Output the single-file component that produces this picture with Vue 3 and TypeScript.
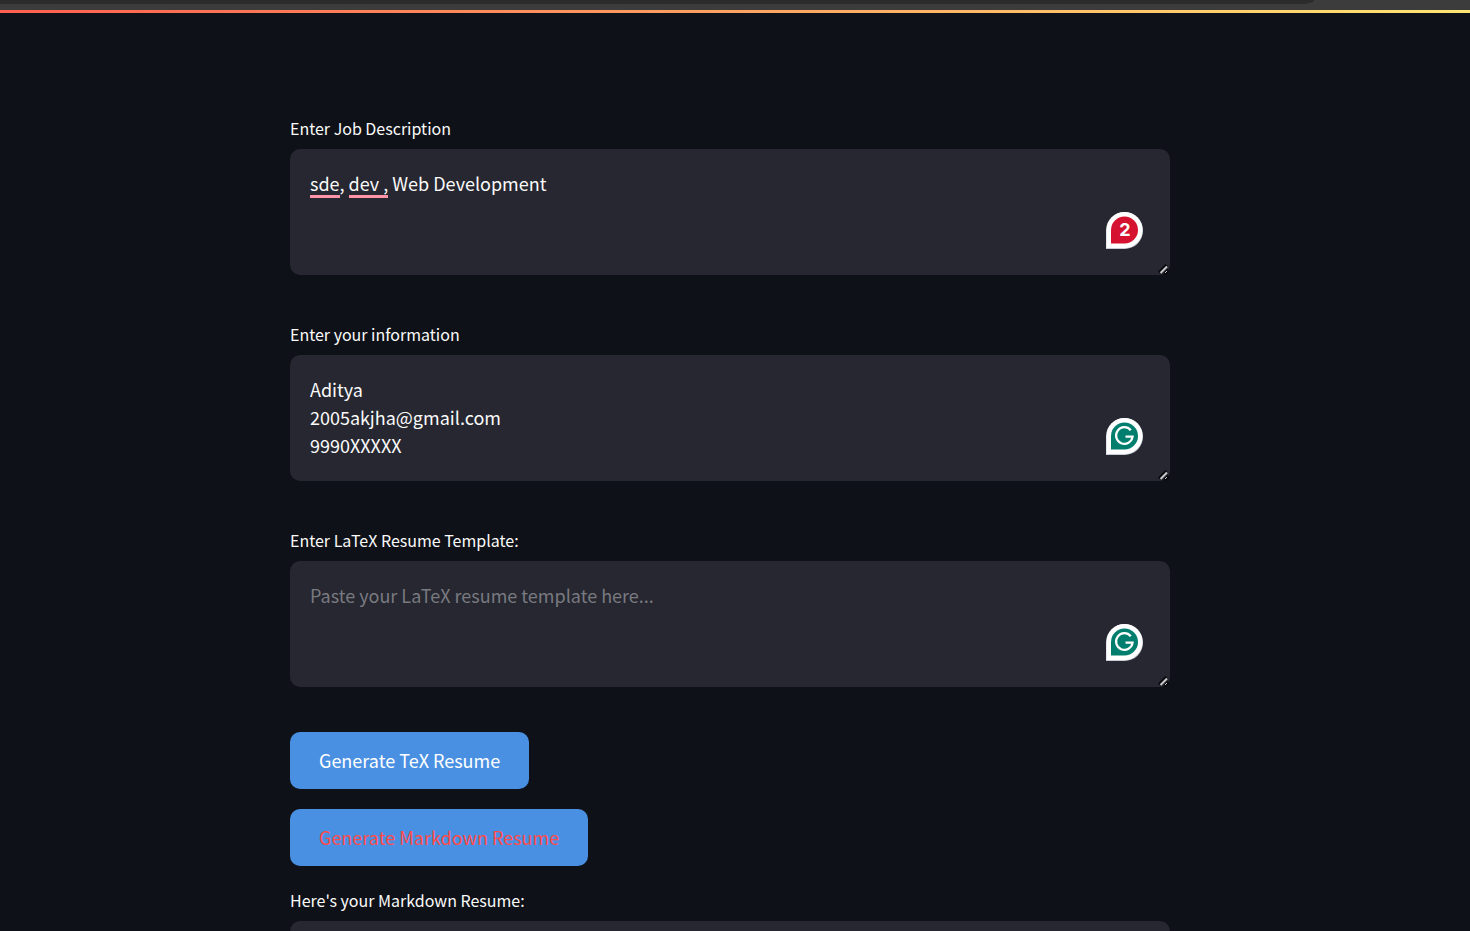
<script setup lang="ts">
import { ref } from 'vue'

interface Segment {
  text: string
  flagged: boolean
}

interface Field {
  id: string
  label: string
  value: string
  placeholder: string
  issues: number
  segments: Segment[]
}

const fields = ref<Field[]>([
  {
    id: 'job',
    label: 'Enter Job Description',
    value: 'sde, dev , Web Development',
    placeholder: '',
    issues: 2,
    segments: [
      { text: 'sde', flagged: true },
      { text: ', ', flagged: false },
      { text: 'dev ,', flagged: true },
    ],
  },
  {
    id: 'info',
    label: 'Enter your information',
    value: 'Aditya\n2005akjha@gmail.com\n9990XXXXX',
    placeholder: '',
    issues: 0,
    segments: [],
  },
  {
    id: 'template',
    label: 'Enter LaTeX Resume Template:',
    value: '',
    placeholder: 'Paste your LaTeX resume template here...',
    issues: 0,
    segments: [],
  },
])
const output = ref('')
</script>

<template>
  <div class="page">
    <div class="chrome"><div class="tabstrip"></div></div>
    <div class="decoration"></div>
    <main class="content">
      <div v-for="field in fields" :key="field.id" class="field">
        <label :for="field.id">{{ field.label }}</label>
        <div class="box">
          <div v-if="field.segments.length" class="marks" aria-hidden="true">
            <span v-for="(s, i) in field.segments" :key="i" :class="{ flagged: s.flagged }">{{ s.text }}</span>
          </div>
          <textarea :id="field.id" v-model="field.value" :placeholder="field.placeholder" spellcheck="false"></textarea>
          <button class="checker" type="button" aria-label="Writing suggestions">
            <svg width="38" height="38" viewBox="0 0 38 38">
              <path d="M0 38V19A18.5 18.5 0 1 1 18.5 38Z" fill="#c9cbd6" />
              <path d="M.5 37V19A18 18 0 1 1 18.5 37Z" fill="#fff" />
              <path d="M5 32.5V19A13.5 13.5 0 1 1 18.5 32.5Z" :fill="field.issues ? '#d5122f' : '#027e6f'" />
              <path v-if="!field.issues" d="M24.8 13.2A8.3 8.3 0 1 0 26.600 19.700H19.500" fill="none" stroke="#fff" stroke-width="2.2" />
            </svg>
            <span v-if="field.issues" class="count">{{ field.issues }}</span>
          </button>
          <svg class="grip" width="12" height="12" viewBox="0 0 12 12" aria-hidden="true">
            <path d="M1 9.500L8.500 2M6.500 11L10.500 7" stroke="#08090c" stroke-width="3" />
            <path d="M2.500 10L9 3.500" stroke="#c8c8ca" stroke-width="2" />
            <path d="M7 10L9 8" stroke="#c8c8ca" stroke-width="1" />
          </svg>
        </div>
      </div>
      <div class="actions">
        <button class="action" type="button">Generate TeX Resume</button>
        <button class="action active" type="button">Generate Markdown Resume</button>
      </div>
      <div class="field">
        <label for="output">Here's your Markdown Resume:</label>
        <div class="box">
          <textarea id="output" v-model="output"></textarea>
        </div>
      </div>
    </main>
  </div>
</template>

<style>
body {
  margin: 0;
  background: #0e1117;
}
</style>

<style scoped>
.page {
  height: 100vh;
  overflow-y: auto;
  scrollbar-width: none;
  background: #0e1117;
  color: #fafafa;
  font-family: "Noto Sans CJK SC", "Noto Sans", sans-serif;
}
.chrome {
  height: 10px;
  background: #3c3c3c;
}
.tabstrip {
  height: 4px;
  margin-right: 156px;
  background: #2b2b2b;
  border-bottom-right-radius: 12px 4px;
}
.decoration {
  height: 3px;
  background: linear-gradient(90deg, #ff5f50, #ffe673);
}
.content {
  box-sizing: border-box;
  width: calc(100% - 10px);
  max-width: 920px;
  margin-right: auto;
  margin-left: max(0px, calc(50% - 465px));
  padding: 101px 20px 40px;
}
.field + .field {
  margin-top: 45px;
}
label {
  display: block;
  margin-bottom: 7px;
  font-size: 16px;
  line-height: 28px;
}
.box {
  position: relative;
  height: 126px;
  border-radius: 10px;
  background: #262730;
}
textarea,
.marks {
  box-sizing: border-box;
  width: 100%;
  height: 100%;
  padding: 20px;
  font-size: 18px;
  line-height: 28px;
  font-family: inherit;
}
textarea {
  display: block;
  position: relative;
  border: 0;
  outline: 0;
  background: transparent;
  color: #fafafa;
  resize: none;
}
textarea::placeholder {
  color: #797a80;
  opacity: 1;
}
.marks {
  position: absolute;
  inset: 0;
  color: transparent;
  white-space: pre-wrap;
}
.flagged {
  padding-bottom: 2px;
  background: linear-gradient(#ff94a8, #ff94a8) 0 100% / 100% 3px no-repeat;
}
.checker {
  position: absolute;
  right: 26px;
  bottom: 26px;
  width: 38px;
  height: 38px;
  padding: 0;
  border: 0;
  background: none;
}
.checker svg {
  display: block;
}
.count {
  position: absolute;
  inset: 0;
  color: #fff;
  font: 700 18px/37px Inter, sans-serif;
  text-align: center;
}
.grip {
  position: absolute;
  right: 0;
  bottom: 0;
  pointer-events: none;
}
.actions {
  display: flex;
  flex-direction: column;
  align-items: flex-start;
  gap: 20px;
  margin: 45px 0 20px;
}
.action {
  padding: 14px 29px 15px;
  border: 0;
  border-radius: 10px;
  background: #4a90e2;
  color: #fff;
  font-family: inherit;
  font-size: 18px;
  line-height: 28px;
}
.action.active {
  color: #ff4b4b;
}
</style>
